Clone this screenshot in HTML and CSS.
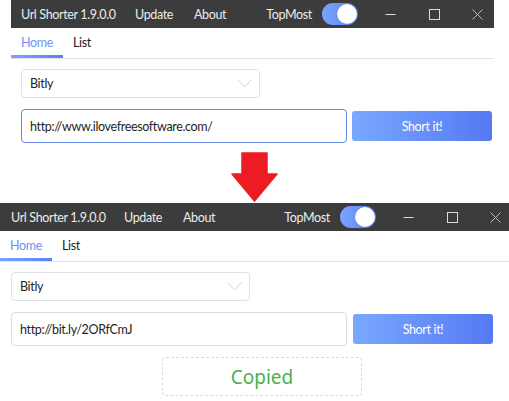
FILE: index.html
```html
<!DOCTYPE html>
<html>
<head>
<meta charset="utf-8">
<link rel="stylesheet" href="styles.css">
</head>
<body>
<div class="shot">
  <div class="win win-a">
    <div class="titlebar">
      <span class="app">Url Shorter 1.9.0.0</span>
      <span class="menu m-update">Update</span>
      <span class="menu m-about">About</span>
      <span class="spacer"></span>
      <span class="topmost">TopMost</span>
      <span class="toggle"><span class="knob"></span></span>
      <svg class="ctrl c-min" width="11" height="11" viewBox="0 0 11 11"><path d="M0.5 5.5H10.5" stroke="#dcdcdc" stroke-width="1"/></svg>
      <svg class="ctrl c-max" width="11" height="11" viewBox="0 0 11 11"><rect x="0.5" y="0.5" width="10" height="10" fill="none" stroke="#dcdcdc" stroke-width="1"/></svg>
      <svg class="ctrl c-close" width="11" height="11" viewBox="0 0 11 11"><path d="M0.5 0.5L10.5 10.5M10.5 0.5L0.5 10.5" stroke="#bdbdbd" stroke-width="1"/></svg>
    </div>
    <div class="tabs">
      <span class="tab active">Home</span>
      <span class="tab">List</span>
    </div>
    <div class="content">
      <div class="combo">
        <span>Bitly</span>
        <svg width="15" height="9" viewBox="0 0 15 9"><path d="M0.5 0.5L7.5 8L14.5 0.5" fill="none" stroke="#d2d2d2" stroke-width="1"/></svg>
      </div>
      <div class="row">
        <div class="input focused">http://www.ilovefreesoftware.com/</div>
        <div class="btn">Short it!</div>
      </div>
    </div>
  </div>

  <div class="arrow-row">
    <svg class="arrow" width="47" height="50" viewBox="0 0 47 50">
      <polygon points="11,1 36,1 36,22 46,22 23.5,49 1,22 11,22" fill="#ed1c24" stroke="#ed1c24" stroke-width="1.5" stroke-linejoin="round"/>
    </svg>
  </div>

  <div class="win win-b">
    <div class="titlebar">
      <span class="app">Url Shorter 1.9.0.0</span>
      <span class="menu m-update">Update</span>
      <span class="menu m-about">About</span>
      <span class="spacer"></span>
      <span class="topmost">TopMost</span>
      <span class="toggle"><span class="knob"></span></span>
      <svg class="ctrl c-min" width="11" height="11" viewBox="0 0 11 11"><path d="M0.5 5.5H10.5" stroke="#dcdcdc" stroke-width="1"/></svg>
      <svg class="ctrl c-max" width="11" height="11" viewBox="0 0 11 11"><rect x="0.5" y="0.5" width="10" height="10" fill="none" stroke="#dcdcdc" stroke-width="1"/></svg>
      <svg class="ctrl c-close" width="11" height="11" viewBox="0 0 11 11"><path d="M0.5 0.5L10.5 10.5M10.5 0.5L0.5 10.5" stroke="#bdbdbd" stroke-width="1"/></svg>
    </div>
    <div class="tabs">
      <span class="tab active">Home</span>
      <span class="tab">List</span>
    </div>
    <div class="content">
      <div class="combo">
        <span>Bitly</span>
        <svg width="15" height="9" viewBox="0 0 15 9"><path d="M0.5 0.5L7.5 8L14.5 0.5" fill="none" stroke="#d2d2d2" stroke-width="1"/></svg>
      </div>
      <div class="row">
        <div class="input">http://bit.ly/2ORfCmJ</div>
        <div class="btn">Short it!</div>
      </div>
      <div class="copied">Copied</div>
    </div>
  </div>
</div>
</body>
</html>
```

FILE: styles.css
```css
* { box-sizing: border-box; }
html, body {
  margin: 0;
  padding: 0;
  background: #ffffff;
  width: 509px;
  height: 401px;
  overflow: hidden;
}
body {
  font-family: "Lato", "Noto Sans", sans-serif;
  font-size: 12.5px;
  letter-spacing: -0.35px;
  color: #1e1e1e;
}
.shot {
  display: flex;
  flex-direction: column;
  width: 509px;
}
.win {
  background: #fff;
  flex: none;
}
.win-a {
  width: 483px;
  margin-left: 11px;
}
.win-b {
  width: 512px;
  margin-left: 0;
}
.titlebar {
  height: 28px;
  background: #3c3c3c;
  color: #ececec;
  display: flex;
  align-items: center;
  padding-right: 11px;
  white-space: nowrap;
}
.app {
  width: 124px;
  padding-left: 10px;
}
.win-b .app { padding-left: 11px; }
.m-update { width: 59px; }
.m-about { width: 40px; }
.spacer { flex: 1; }
.topmost { margin-right: 10px; }
.toggle {
  width: 36px;
  height: 22px;
  border-radius: 11px;
  background: linear-gradient(90deg, #7aa5ff, #5b7ff3);
  display: flex;
  align-items: center;
  justify-content: flex-end;
  padding-right: 1px;
}
.knob {
  width: 20px;
  height: 20px;
  border-radius: 50%;
  background: #fff;
  box-shadow: 0 0 1px rgba(0,0,0,0.3);
}
.ctrl { display: block; flex: none; }
.c-min { margin-left: 27px; }
.c-max { margin-left: 33px; }
.c-close { margin-left: 32px; }

.tabs {
  height: 31px;
  display: flex;
  border-bottom: 1px solid #e3e3e3;
}
.tab {
  padding: 2px 0 0;
  width: 52px;
  justify-content: center;
  display: flex;
  align-items: center;
  height: 30px;
  border-bottom: 3px solid transparent;
  color: #1e1e1e;
}
.tab + .tab { justify-content: flex-start; padding-left: 10px; }
.tab.active {
  color: #6e91f6;
  border-image: linear-gradient(90deg, #7aa5ff, #5b7ff3) 1;
  border-bottom: 3px solid;
}
.content {
  padding-top: 10px;
  display: flex;
  flex-direction: column;
}
.win-a .content { padding-left: 10px; }
.win-b .content { padding-left: 11px; }
.combo {
  width: 239px;
  height: 29px;
  border: 1px solid #e1e1e1;
  border-radius: 4px;
  display: flex;
  align-items: center;
  justify-content: space-between;
  padding: 0 7px 0 8px;
}
.combo svg { display: block; }
.row {
  display: flex;
  align-items: center;
  margin-top: 11px;
}
.win-a .row { width: 471px; gap: 5px; }
.win-b .row { width: 482px; gap: 6px; }
.input {
  flex: 1;
  height: 34px;
  border: 1px solid #dedede;
  border-radius: 4px;
  display: flex;
  align-items: center;
  padding-left: 8px;
}
.input.focused { border-color: #6688e6; }
.btn {
  width: 140px;
  height: 30px;
  border-radius: 3px;
  background: linear-gradient(90deg, #79a8ff, #5579f3);
  color: #fff;
  display: flex;
  align-items: center;
  justify-content: center;
}
.arrow-row {
  height: 60px;
  padding-top: 9px;
  padding-left: 231px;
}
.arrow { display: block; }
.copied {
  margin-top: 11px;
  margin-left: 151px;
  width: 200px;
  height: 39px;
  border: 1px dashed #dcdcdc;
  border-radius: 4px;
  color: #4caf50;
  font-family: "Noto Sans", sans-serif;
  font-size: 19px;
  letter-spacing: 0;
  display: flex;
  align-items: center;
  justify-content: center;
}
```
